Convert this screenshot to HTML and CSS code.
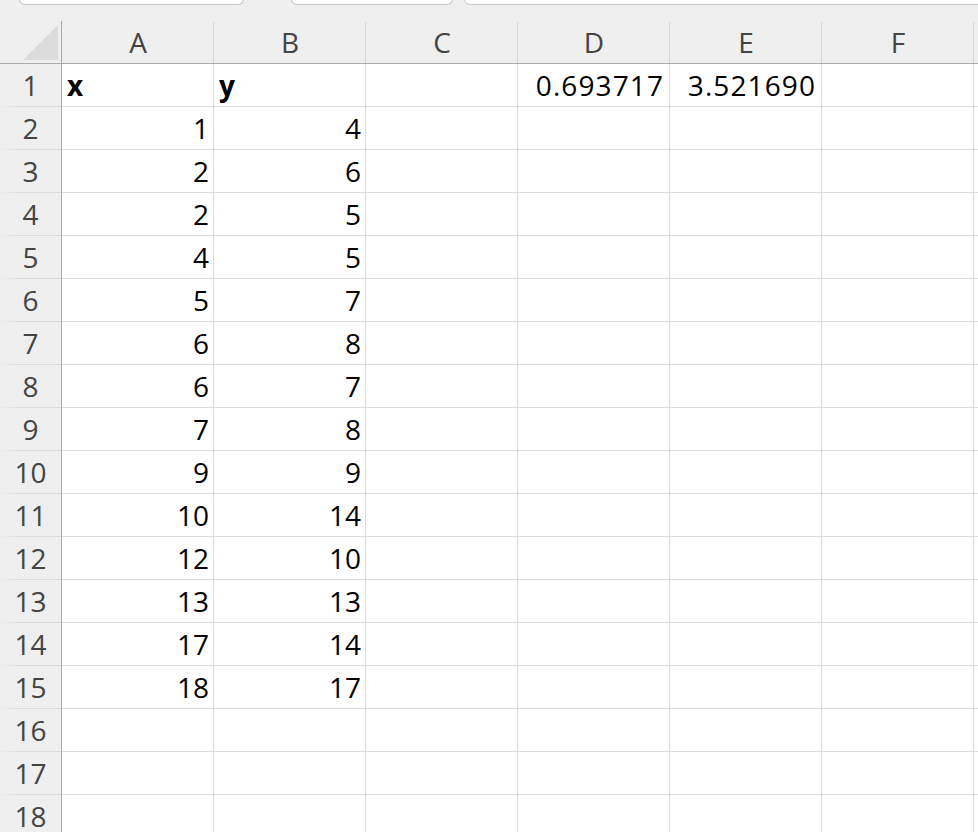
FILE: index.html
```html
<!DOCTYPE html>
<html lang="en">
<head>
    <meta charset="UTF-8">
    <title>Sheet1</title>
    <link rel="stylesheet" href="styles.css">
</head>
<body>
    <div class="tabStrip">
        <div class="tab tab1"></div>
        <div class="tab tab2"></div>
        <div class="tab tab3"></div>
    </div>

    <div class="sheet" id="sheet">
        <div class="corner">
            <svg class="cornerMark" width="36" height="36" viewBox="0 0 36 36">
                <polygon points="35,0 35,35 0,35" fill="#dcdcdc"/>
            </svg>
        </div>
        <div class="colHead">A</div>
        <div class="colHead">B</div>
        <div class="colHead">C</div>
        <div class="colHead">D</div>
        <div class="colHead">E</div>
        <div class="colHead">F</div>
        <div class="colHead last"></div>
    </div>

    <script>
        var dados = [
            ['x', 'y', '', '0.693717', '3.521690', ''],
            [1, 4], [2, 6], [2, 5], [4, 5], [5, 7], [6, 8], [6, 7],
            [7, 8], [9, 9], [10, 14], [12, 10], [13, 13], [17, 14], [18, 17],
            [], [], []
        ];

        var sheet = document.getElementById('sheet');

        dados.forEach(function(linha, index) {
            var rowHead = document.createElement('div');
            rowHead.className = 'rowHead';
            rowHead.textContent = index + 1;
            sheet.appendChild(rowHead);

            for (var c = 0; c < 7; c++) {
                var cell = document.createElement('div');
                var valor = linha[c];
                cell.className = 'cell';
                if (c === 6) cell.className += ' last';
                if (valor !== undefined && valor !== '') {
                    if (typeof valor === 'number') {
                        cell.className += ' num';
                    } else if (!isNaN(parseFloat(valor))) {
                        cell.className += ' num dec';
                    } else {
                        cell.className += ' bold';
                    }
                    cell.textContent = valor;
                }
                sheet.appendChild(cell);
            }
        });
    </script>
</body>
</html>
```

FILE: styles.css
```css
body {
    margin: 0;
    padding: 0;
    background-color: #ffffff;
    font-family: "Open Sans", "Noto Sans", sans-serif;
    overflow: hidden;
}
.tabStrip {
    display: flex;
    height: 6px;
    background-color: #efefef;
    overflow: hidden;
}
.tab {
    height: 6px;
    box-sizing: border-box;
    margin-top: -1px;
    background-color: #fff;
    border: 1px solid #c9c9c9;
    border-top: none;
    border-radius: 0 0 7px 7px;
}
.tab1 {
    margin-left: 19px;
    width: 225px;
}
.tab2 {
    margin-left: 47px;
    width: 162px;
}
.tab3 {
    margin-left: 11px;
    flex: 1;
    margin-right: -20px;
}
.sheet {
    display: grid;
    grid-template-columns: 62px repeat(6, 152px) 1fr;
    grid-auto-rows: 43px;
    grid-template-rows: 58px;
}
.corner,
.colHead {
    box-sizing: border-box;
    background-color: #efefef;
    border-bottom: 1px solid #ababab;
}
.corner {
    position: relative;
    background-image: linear-gradient(#ababab, #ababab);
    background-repeat: no-repeat;
    background-position: right bottom;
    background-size: 1px 42px;
}
.cornerMark {
    position: absolute;
    right: 3px;
    bottom: 2px;
}
.colHead {
    padding-top: 16px;
    line-height: 41px;
    font-size: 28px;
    text-align: center;
    color: #444;
    background-image: linear-gradient(#d6d6d6, #d6d6d6);
    background-repeat: no-repeat;
    background-position: right bottom;
    background-size: 1px 41px;
}
.colHead.last {
    background-image: none;
}
.rowHead {
    box-sizing: border-box;
    background-color: #efefef;
    border-right: 1px solid #ababab;
    background-image: linear-gradient(to right, rgba(220,220,220,0), #dcdcdc 30%);
    background-repeat: no-repeat;
    background-position: left bottom;
    background-size: 100% 1px;
    font-size: 28px;
    line-height: 42px;
    text-align: center;
    color: #444;
}
.cell {
    box-sizing: border-box;
    border-right: 1px solid #dcdcdc;
    border-bottom: 1px solid #dcdcdc;
    font-size: 28px;
    line-height: 42px;
    padding: 0 5px;
    color: #000;
    white-space: nowrap;
}
.cell.last {
    border-right: none;
}
.num {
    text-align: right;
    padding-right: 4px;
}
.dec {
    letter-spacing: 1.1px;
    padding-right: 5px;
}
.bold {
    font-weight: bold;
}
```
